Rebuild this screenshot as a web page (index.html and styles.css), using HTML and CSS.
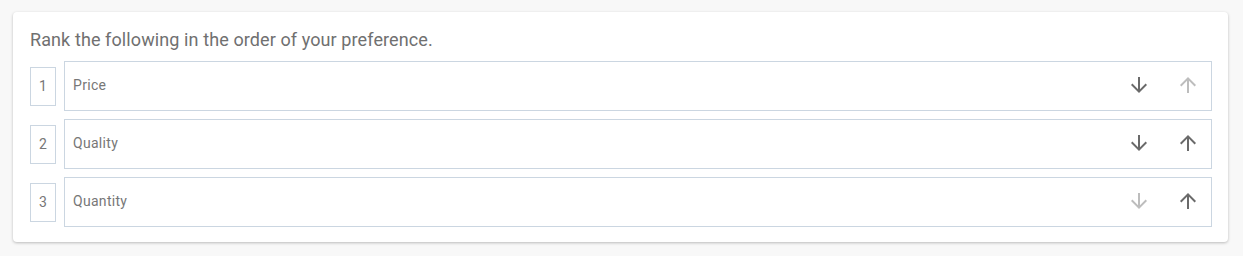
FILE: index.html
```html
<!DOCTYPE html>
<html>
<head>
<meta charset="utf-8">
<link rel="stylesheet" href="styles.css">
</head>
<body>
<div class="card">
  <div class="title">Rank the following in the order of your preference.</div>
  <div class="list">
    <div class="row">
      <div class="num">1</div>
      <div class="item">
        <span class="label">Price</span>
        <div class="btns">
          <span class="btn"><svg viewBox="0 0 24 24" width="24" height="24"><path d="M20 12l-1.41-1.41L13 16.17V4h-2v12.17l-5.58-5.59L4 12l8 8 8-8z"/></svg></span>
          <span class="btn dis"><svg viewBox="0 0 24 24" width="24" height="24"><path d="M4 12l1.41 1.41L11 7.83V20h2V7.83l5.58 5.59L20 12l-8-8-8 8z"/></svg></span>
        </div>
      </div>
    </div>
    <div class="row">
      <div class="num">2</div>
      <div class="item">
        <span class="label">Quality</span>
        <div class="btns">
          <span class="btn"><svg viewBox="0 0 24 24" width="24" height="24"><path d="M20 12l-1.41-1.41L13 16.17V4h-2v12.17l-5.58-5.59L4 12l8 8 8-8z"/></svg></span>
          <span class="btn"><svg viewBox="0 0 24 24" width="24" height="24"><path d="M4 12l1.41 1.41L11 7.83V20h2V7.83l5.58 5.59L20 12l-8-8-8 8z"/></svg></span>
        </div>
      </div>
    </div>
    <div class="row">
      <div class="num">3</div>
      <div class="item">
        <span class="label">Quantity</span>
        <div class="btns">
          <span class="btn dis"><svg viewBox="0 0 24 24" width="24" height="24"><path d="M20 12l-1.41-1.41L13 16.17V4h-2v12.17l-5.58-5.59L4 12l8 8 8-8z"/></svg></span>
          <span class="btn"><svg viewBox="0 0 24 24" width="24" height="24"><path d="M4 12l1.41 1.41L11 7.83V20h2V7.83l5.58 5.59L20 12l-8-8-8 8z"/></svg></span>
        </div>
      </div>
    </div>
  </div>
</div>
</body>
</html>
```
FILE: styles.css
```css
html, body {
  margin: 0;
  padding: 0;
  background: #f8f8f8;
}
body {
  padding: 12px 15px 14px 13px;
  font-family: Roboto, "Liberation Sans", sans-serif;
}
.card {
  background: #fff;
  border-radius: 4px;
  box-shadow: 0 1px 3px rgba(0,0,0,0.25);
  padding: 17px 16px 15px 17px;
  height: 230px;
  box-sizing: border-box;
}
.title {
  font-size: 18px;
  letter-spacing: 0.1px;
  color: #707070;
  line-height: 22px;
  margin-bottom: 10px;
}
.list {
  display: flex;
  flex-direction: column;
  gap: 8px;
}
.row {
  display: flex;
  align-items: center;
  gap: 8px;
}
.num {
  width: 26px;
  height: 39px;
  box-sizing: border-box;
  border: 1px solid #cbd6e1;
  display: flex;
  align-items: center;
  justify-content: center;
  font-size: 14px;
  color: #777;
}
.item {
  flex: 1;
  height: 50px;
  box-sizing: border-box;
  border: 1px solid #cbd6e1;
  display: flex;
  align-items: center;
  padding: 0 12px 0 8px;
}
.label {
  flex: 1;
  font-size: 14px;
  letter-spacing: 0.3px;
  color: #777;
  padding-bottom: 2px;
}
.btns {
  display: flex;
  gap: 25px;
  margin-bottom: 2px;
  margin-right: -1px;
}
.btn {
  display: flex;
  color: #6a6a6a;
}
.btn svg {
  fill: currentColor;
}
.btn.dis {
  color: #bdbdbd;
}
```
